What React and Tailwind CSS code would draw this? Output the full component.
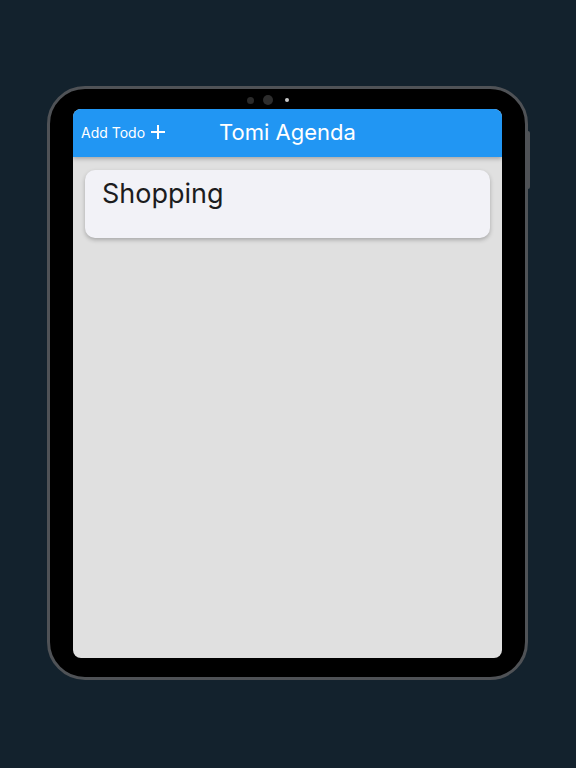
import React from 'react';

const PlusIcon = () => (
  <svg width="16" height="16" viewBox="0 0 16 16" fill="none" stroke="white" strokeWidth="2">
    <path d="M8 1v14M1 8h14" />
  </svg>
);

const TodoCard = ({ title }) => (
  <div className="mx-3 mt-[13px] h-[68px] rounded-[10px] bg-[#f2f2f7] px-[17px] pt-[7px] shadow-[0_2px_4px_rgba(0,0,0,0.25)]">
    <p className="text-[27px] leading-[34px] text-[#1c1c1e]">{title}</p>
  </div>
);

const App = () => {
  const todos = ['Shopping'];

  return (
    <div
      className="w-[576px] h-[768px] bg-[#13222d] flex items-start justify-start pl-[47px] pt-[86px]"
      style={{ fontFamily: 'Inter, "Noto Sans", sans-serif' }}
    >
      <div className="relative w-[481px] h-[594px] rounded-[38px] border-[3px] border-[#4f5256] bg-black px-[23px] pt-[20px] pb-[19px] flex flex-col">
        {/* camera */}
        <div className="absolute top-[6px] left-[197px] flex items-center gap-[9px]">
          <span className="w-[7px] h-[7px] rounded-full bg-[#2a2a2a]" />
          <span className="w-[10px] h-[10px] rounded-full bg-[#2d2d2d]" />
          <span className="w-[4px] h-[4px] rounded-full bg-[#c8c8c8] ml-[3px]" />
        </div>
        {/* side button */}
        <div className="absolute right-[-5px] top-[42px] w-[2px] h-[58px] rounded-r bg-[#4f5256]" />

        <div className="flex-1 rounded-[8px] overflow-hidden bg-[#e0e0e0] flex flex-col">
          <div className="h-[48px] bg-[#2196f3] grid grid-cols-[1fr_auto_1fr] items-center px-2 pb-[2px] shadow-[0_2px_4px_rgba(0,0,0,0.25)] relative z-10">
            <button className="flex items-center gap-[5px] text-white text-[14px] justify-self-start">
              Add Todo
              <PlusIcon />
            </button>
            <h1 className="text-white text-[22px] leading-[28px]">Tomi Agenda</h1>
            <div />
          </div>
          {todos.map((t) => (
            <TodoCard key={t} title={t} />
          ))}
        </div>
      </div>
    </div>
  );
};

export default App;
